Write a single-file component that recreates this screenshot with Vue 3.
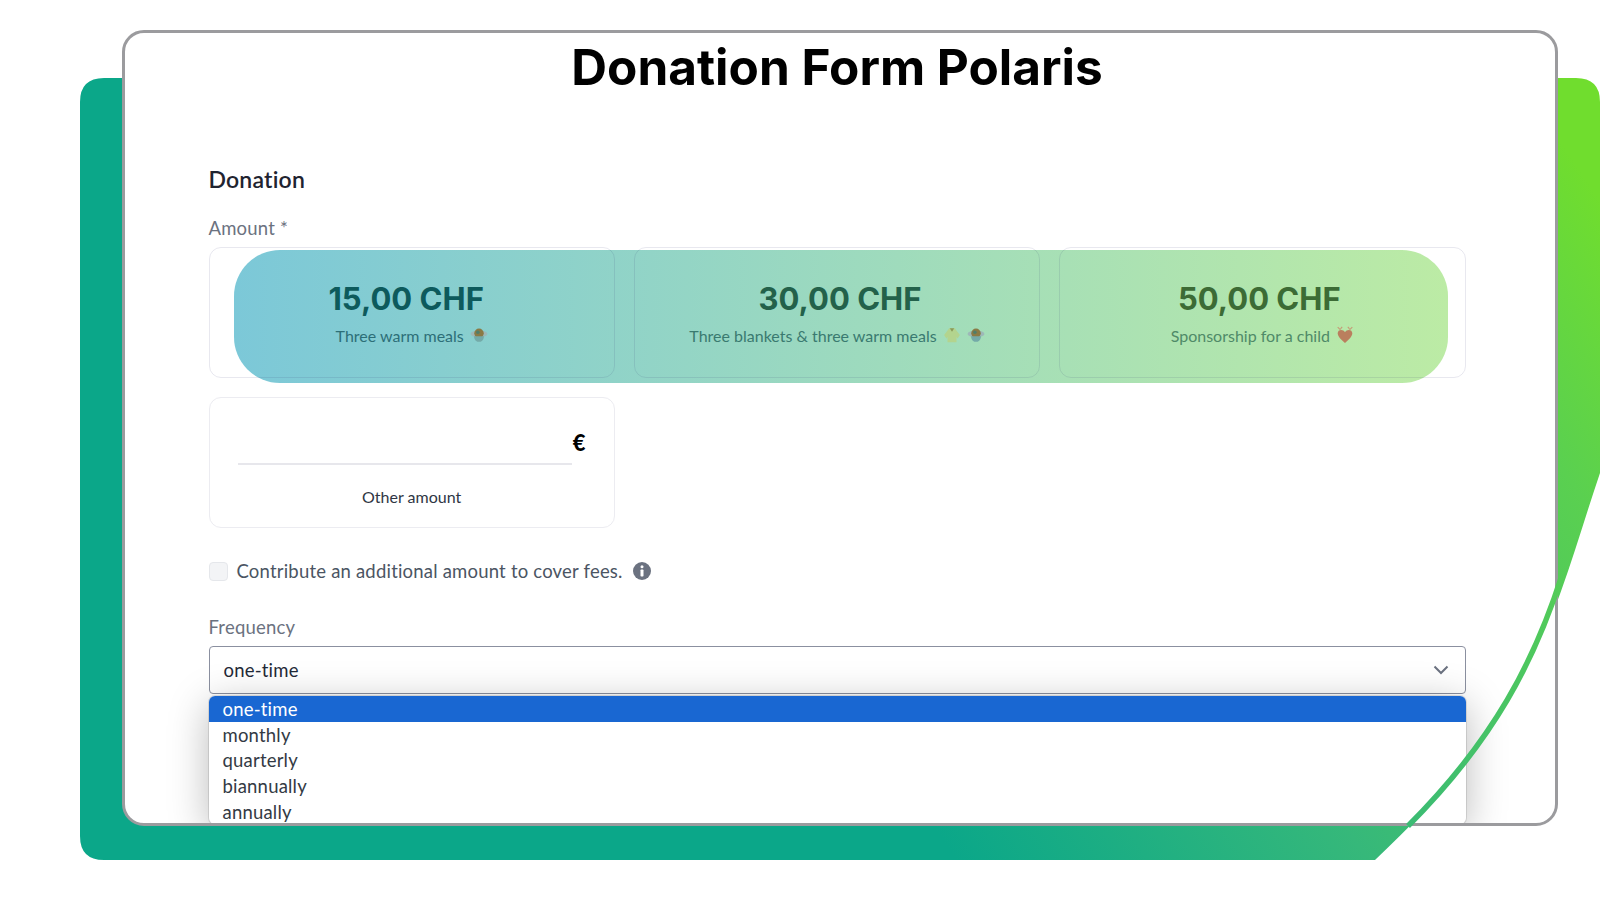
<script setup>
const tiers = [
  { amount: '15,00 CHF', text: 'Three warm meals', color: '#0d5a5c', sub: '#2d6f78', icons: ['bowl'] },
  { amount: '30,00 CHF', text: 'Three blankets & three warm meals', color: '#23614a', sub: '#3a7a70', icons: ['blanket', 'bowl'] },
  { amount: '50,00 CHF', text: 'Sponsorship for a child', color: '#3c6b35', sub: '#4f8a68', icons: ['heart'] }
]
const options = ['one-time', 'monthly', 'quarterly', 'biannually', 'annually']
</script>

<template>
  <div class="page">
    <svg class="backdrop" viewBox="0 0 1600 900" width="1600" height="900" aria-hidden="true">
      <defs>
        <linearGradient id="sweep" gradientUnits="userSpaceOnUse" x1="850" y1="700" x2="1600" y2="200">
          <stop offset="0" stop-color="#0ba789" />
          <stop offset="0.38" stop-color="#36b87a" />
          <stop offset="0.8" stop-color="#5ad050" />
          <stop offset="1" stop-color="#70dd2e" />
        </linearGradient>
      </defs>
      <path fill="url(#sweep)" d="M104 78 H1576 Q1600 78 1600 102 V473 C1574.5 548 1555.5 625 1512 700 C1481 753 1431 807 1375 860 H104 Q80 860 80 836 V102 Q80 78 104 78 Z" />
    </svg>

    <main class="card">
      <h1 class="title">Donation Form Polaris</h1>
      <h2 class="section">Donation</h2>
      <div class="label amount-label">Amount *</div>

      <div class="amounts">
        <div class="wash"></div>
        <div v-for="t in tiers" :key="t.amount" class="tier">
          <div class="value" :style="{ color: t.color }">{{ t.amount }}</div>
          <div class="desc" :style="{ color: t.sub }">
            <span>{{ t.text }}</span>
            <template v-for="(ic, i) in t.icons" :key="i">
              <svg v-if="ic === 'bowl'" class="emoji" viewBox="0 0 16 16">
                <ellipse cx="8" cy="7" rx="7.5" ry="3" fill="#9db8b8" />
                <circle cx="8" cy="6.5" r="4.2" fill="#8a7a45" />
                <circle cx="7" cy="5.5" r="1.6" fill="#4f7d6a" />
                <path d="M3.5 9 H12.5 C12 13 10 14 8 14 C6 14 4 13 3.5 9 Z" fill="#74aaa8" />
              </svg>
              <svg v-else-if="ic === 'blanket'" class="emoji" viewBox="0 0 16 16">
                <path d="M5.5 2 H10.5 L15 8 L13 11 L12 9.5 V14.5 H4 V9.5 L3 11 L1 8 Z" fill="#b3d48e" />
                <path d="M6 2 H10 L8 5 Z" fill="#8a9a5a" />
              </svg>
              <svg v-else class="emoji" viewBox="0 0 16 16">
                <path d="M8 15 C3 11 1.500 8.500 1.500 6.500 C1.500 4.500 3 3.500 4.500 3.500 C6 3.500 7.300 4.300 8 5.500 C8.700 4.300 10 3.500 11.500 3.500 C13 3.500 14.500 4.500 14.500 6.500 C14.500 8.500 13 11 8 15 Z" fill="#ba7f5e" />
                <path d="M4 3.500 L1.500 1 M4 2.500 L5.500 0.800 M12 3.500 L14.500 1 M12 2.500 L10.500 0.800" stroke="#c79a76" stroke-width="1" fill="none" />
              </svg>
            </template>
          </div>
        </div>

        <div class="other">
          <div class="other-field">
            <span class="other-line"></span>
            <span class="euro">€</span>
          </div>
          <div class="other-label">Other amount</div>
        </div>
      </div>

      <div class="fees">
        <span class="check"></span>
        <span class="fees-text">Contribute an additional amount to cover fees.</span>
        <svg class="info" viewBox="0 0 18 18">
          <circle cx="9" cy="9" r="9" fill="#6b7280" />
          <circle cx="9" cy="4.800" r="1.500" fill="#fff" />
          <rect x="7.500" y="7.500" width="3" height="7" rx="0.800" fill="#fff" />
        </svg>
      </div>

      <div class="label freq-label">Frequency</div>
      <div class="select-wrap">
        <div class="select">
          <span>one-time</span>
          <svg class="chev" viewBox="0 0 16 10">
            <path d="M1.500 1.500 L8 8 L14.500 1.500" fill="none" stroke="#6b7280" stroke-width="2" />
          </svg>
        </div>
        <ul class="menu">
          <li v-for="(o, i) in options" :key="o" :class="{ active: i === 0 }">{{ o }}</li>
        </ul>
      </div>
    </main>

    <svg class="band" viewBox="0 0 1600 900" width="1600" height="900" aria-hidden="true">
      <defs>
        <linearGradient id="sweep2" gradientUnits="userSpaceOnUse" x1="850" y1="700" x2="1600" y2="200">
          <stop offset="0" stop-color="#0ba789" />
          <stop offset="0.38" stop-color="#36b87a" />
          <stop offset="0.8" stop-color="#5ad050" />
          <stop offset="1" stop-color="#70dd2e" />
        </linearGradient>
      </defs>
      <path d="M1562 575 C1535 660 1494 740 1408 826" fill="none" stroke="url(#sweep2)" stroke-width="5.500" />
    </svg>
  </div>
</template>

<style>
html, body { margin: 0; background: #fff; }
</style>

<style scoped>
.page {
  position: relative;
  width: 1600px;
  height: 900px;
  overflow: hidden;
  box-sizing: border-box;
  padding: 30px 42px 74px 122px;
  background: #fff;
  font-family: "Lato", "Noto Sans", sans-serif;
}
.backdrop, .band {
  position: absolute;
  left: 0;
  top: 0;
  pointer-events: none;
}
.band { z-index: 3; }
.card {
  position: relative;
  z-index: 1;
  box-sizing: border-box;
  height: 796px;
  padding: 0 89.5px 0 83.5px;
  background: #fff;
  border: 3px solid #9b9b9e;
  border-radius: 22px;
  overflow: hidden;
}
.title {
  margin: 0;
  height: 80px;
  line-height: 68px;
  text-align: center;
  font-family: "Inter", sans-serif;
  font-size: 49.5px;
  font-weight: 700;
  color: #000;
}
.section {
  margin: 51px 0 0;
  height: 30px;
  line-height: 30px;
  font-size: 23px;
  font-weight: 600;
  letter-spacing: 0.2px;
  color: #1f2430;
}
.label {
  height: 24px;
  line-height: 24px;
  font-size: 18.5px;
  letter-spacing: 0.2px;
  color: #6b7280;
}
.amount-label { margin-top: 22px; }
.amounts {
  position: relative;
  margin-top: 7px;
  display: grid;
  grid-template-columns: repeat(3, 1fr);
  gap: 19px 19px;
}
.wash {
  position: absolute;
  left: 25.5px;
  top: 3px;
  right: 18px;
  height: 133px;
  border-radius: 46px;
  background: linear-gradient(90deg, #7cc8d8 0%, #bcebA5 100%);
}
.tier {
  position: relative;
  box-sizing: border-box;
  height: 131px;
  padding-top: 31px;
  border: 1.5px solid rgba(50, 50, 110, 0.11);
  border-radius: 12px;
  text-align: center;
}
.value {
  height: 40px;
  line-height: 40px;
  font-family: "Inter", sans-serif;
  font-size: 31px;
  font-weight: 700;
}
.tier:nth-child(2) .value { padding-right: 11px; }
.tier:nth-child(3) .value { padding-left: 6px; }
.tier:nth-child(4) .value { padding-right: 6px; }
.desc {
  margin-top: 4px;
  height: 24px;
  display: flex;
  align-items: center;
  justify-content: center;
  gap: 6px;
  font-size: 16px;
}
.emoji { width: 18px; height: 18px; flex: none; }
.other {
  box-sizing: border-box;
  height: 131px;
  border: 1.5px solid #ececf1;
  border-radius: 12px;
}
.other-field {
  display: flex;
  align-items: flex-end;
  gap: 1px;
  padding: 0 27px 0 28px;
  height: 67px;
}
.other-line {
  flex: 1;
  height: 2px;
  background: #e7e7ec;
}
.euro {
  width: 14px;
  margin-bottom: 10px;
  line-height: 24px;
  font-size: 22px;
  font-weight: 900;
  color: #000;
}
.other-label {
  margin-top: 20px;
  text-align: center;
  line-height: 24px;
  font-size: 16px;
  color: #2f3644;
}
.fees {
  margin-top: 31px;
  height: 24px;
  display: flex;
  align-items: center;
}
.check {
  box-sizing: border-box;
  width: 19px;
  height: 19px;
  background: #f3f4f6;
  border: 1px solid #e5e7eb;
  border-radius: 4px;
}
.fees-text {
  margin-left: 9px;
  font-size: 18.5px;
  letter-spacing: 0.2px;
  color: #4b5563;
}
.info {
  margin-left: 10px;
  width: 18px;
  height: 18px;
}
.freq-label { margin-top: 32px; }
.select-wrap {
  position: relative;
  margin-top: 7px;
}
.select {
  box-sizing: border-box;
  height: 48px;
  padding: 0 16px 0 14px;
  display: flex;
  align-items: center;
  justify-content: space-between;
  border: 1.5px solid #8b90a0;
  border-radius: 4px;
  font-size: 18.5px;
  letter-spacing: 0.2px;
  color: #1f2937;
}
.chev { width: 16px; height: 10px; }
.menu {
  position: absolute;
  z-index: 2;
  left: 0;
  right: 0;
  top: 50px;
  margin: 0;
  padding: 0;
  list-style: none;
  background: #fff;
  border-radius: 6px;
  overflow: hidden;
  box-shadow: 0 8px 40px rgba(0, 0, 0, 0.28), 0 0 0 1px rgba(0, 0, 0, 0.1);
}
.menu li {
  height: 25.7px;
  line-height: 26px;
  padding-left: 14px;
  font-size: 18.5px;
  letter-spacing: 0.2px;
  color: #333a44;
}
.menu li.active {
  background: #1967d2;
  color: #fff;
}
</style>
